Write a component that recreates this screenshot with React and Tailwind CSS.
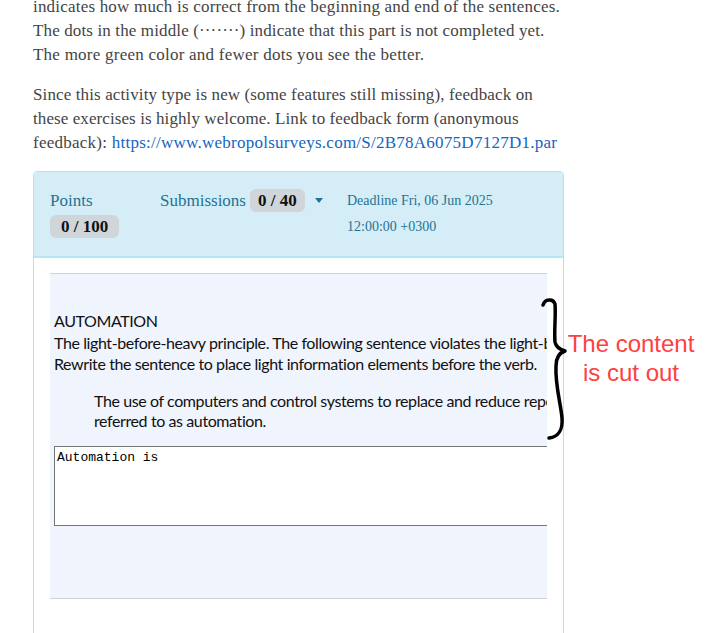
import React from "react";

const serif = { fontFamily: '"Liberation Serif", "DejaVu Serif", serif' };

function Brace() {
  return (
    <svg
      className="absolute left-[540px] top-[290px]"
      width="40"
      height="160"
      viewBox="0 0 40 160"
      fill="none"
    >
      <path
        d="M3 15 C5 9, 13 8, 15 14 C16 25, 14 40, 15 52 C16 57, 19 59, 25 61 C19 63, 16 67, 16 76 C15 95, 21 115, 22 128 C23 140, 18 147, 9 148"
        stroke="#000"
        strokeWidth="3.5"
        strokeLinecap="round"
        strokeLinejoin="round"
      />
    </svg>
  );
}

export default function App() {
  return (
    <div className="relative w-[712px] h-[633px] overflow-hidden bg-white">
      <div className="w-[531px] ml-[33px] mt-[-5px]">
        <div
          className="text-[17px] leading-[24px] text-[#444] whitespace-nowrap"
          style={serif}
        >
          <p>
            <span className="block tracking-[0.2px]">
              indicates how much is correct from the beginning and end of the
              sentences.
            </span>
            <span className="block tracking-[0.13px]">
              The dots in the middle (·······) indicate that this part is not
              completed yet.
            </span>
            <span className="block tracking-[0.24px]">
              The more green color and fewer dots you see the better.
            </span>
          </p>
          <p className="mt-4">
            <span className="block tracking-[0.12px]">
              Since this activity type is new (some features still missing),
              feedback on
            </span>
            <span className="block tracking-[0.09px]">
              these exercises is highly welcome. Link to feedback form
              (anonymous
            </span>
            <span className="block tracking-[0.25px]">
              feedback):{" "}
              <a className="text-[#1565c0]">
                https://www.webropolsurveys.com/S/2B78A6075D7127D1.par
              </a>
            </span>
          </p>
        </div>

        <div className="mt-4 border border-[#aee4f2] rounded-t-[4px]">
          <div
            className="bg-[#d5edf7] border-b-2 border-[#b5e6f4] px-4 pt-[17px] pb-[16px] flex"
            style={serif}
          >
            <div className="w-[110px] flex flex-col items-start">
              <div className="text-[17px] leading-[24px] text-[#1f7394] h-[24px]">
                Points
              </div>
              <div className="mt-[2px] bg-[#d0d5da] rounded-[6px] px-[11px] h-[23px] flex items-center text-[17px] font-bold text-[#111]">
                0 / 100
              </div>
            </div>
            <div className="w-[187px] flex items-start">
              <div className="text-[17px] leading-[24px] text-[#1f7394]">
                Submissions
              </div>
              <div className="ml-[4px] bg-[#d0d5da] rounded-[6px] px-[8px] h-[23px] flex items-center text-[17px] font-bold text-[#111]">
                0 / 40
              </div>
              <svg className="ml-[10px] mt-[9px]" width="8" height="5" viewBox="0 0 8 5">
                <path d="M0 0 L8 0 L4 5 Z" fill="#1f7394" />
              </svg>
            </div>
            <div className="text-[14px] leading-[26px] text-[#1f7394] -mt-[1px]">
              <div>Deadline Fri, 06 Jun 2025</div>
              <div>12:00:00 +0300</div>
            </div>
          </div>

          <div className="bg-white px-4 pt-[15px] pb-[60px]">
            <div
              className="border-t border-b border-[#ccd3dc] bg-[#eff4fd] overflow-hidden pl-[4px] pt-[36px] pb-[72px]"
              style={{ fontFamily: 'Lato, "Liberation Sans", sans-serif' }}
            >
              <div className="text-[16px] leading-[21px] tracking-[-0.4px] text-[#111] whitespace-nowrap">
                <div className="leading-[22px]">AUTOMATION</div>
                <div>
                  The light-before-heavy principle. The following sentence
                  violates the light-before-heavy principle.
                </div>
                <div>
                  Rewrite the sentence to place light information elements
                  before the verb.
                </div>
                <div className="ml-[40px] mt-[17px] leading-[20px]">
                  <div>
                    The use of computers and control systems to replace and
                    reduce repetitive human work is
                  </div>
                  <div>referred to as automation.</div>
                </div>
              </div>
              <div
                className="mt-[15px] w-[600px] h-[80px] bg-white border border-[#767676] px-[2px] pt-[3px] text-[13px] leading-[16px] text-black"
                style={{ fontFamily: '"Liberation Mono", "Courier New", monospace' }}
              >
                Automation is
              </div>
            </div>
          </div>
        </div>
      </div>

      <Brace />
      <div
        className="absolute left-[566px] top-[329px] w-[130px] text-center text-[24px] leading-[29px] text-[#ff4040]"
        style={{ fontFamily: '"Liberation Sans", Arial, sans-serif' }}
      >
        <div>The content</div>
        <div>is cut out</div>
      </div>
    </div>
  );
}
